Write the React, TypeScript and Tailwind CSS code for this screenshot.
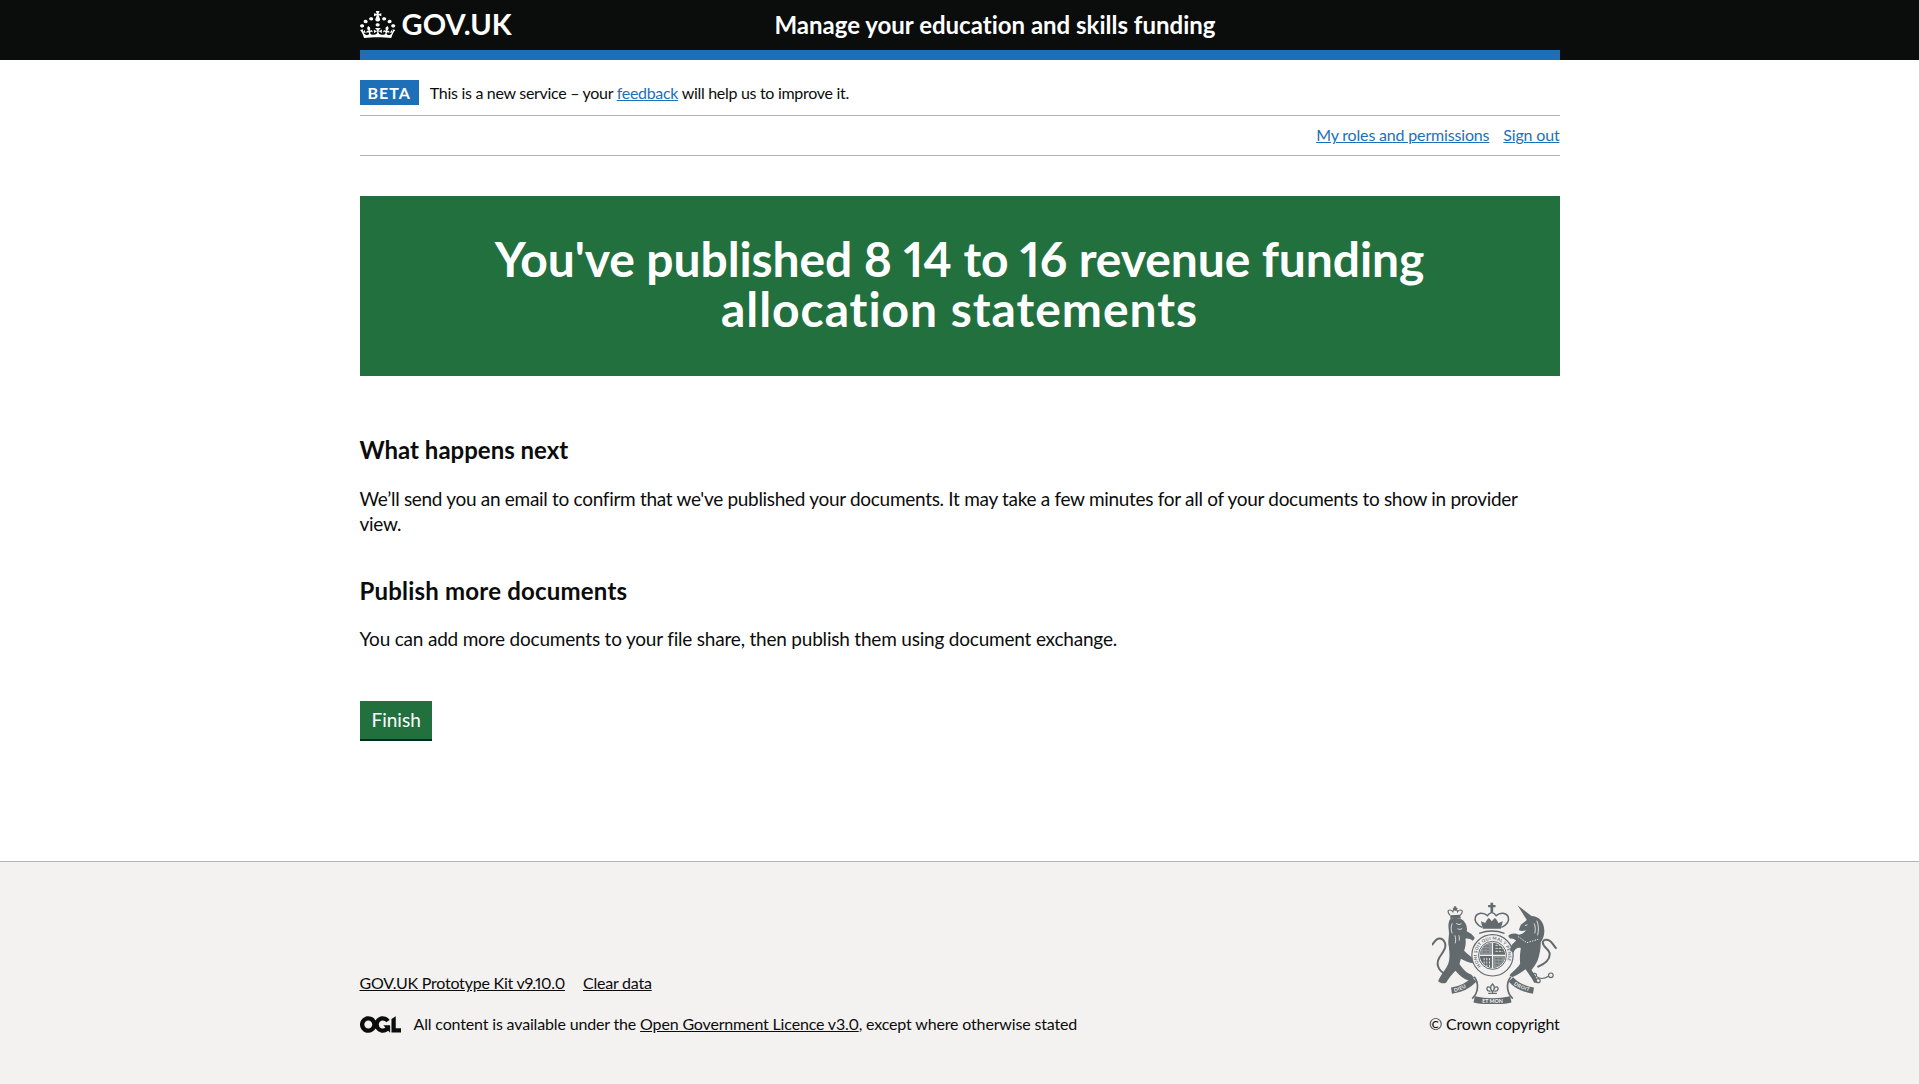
const font = "font-['Lato',sans-serif] [font-variant-ligatures:none] proportional-nums";

function Crown() {
  return (
    <svg viewBox="0 0 32.6 30" width="36" height="27" preserveAspectRatio="none" className="shrink-0 text-white" aria-hidden="true">
      <path fill="currentColor" fillRule="evenodd" d="M22.6 10.4c-1 .4-2-.1-2.4-1-.4-.9.1-2 1-2.4.9-.4 2 .1 2.4 1s-.1 2-1 2.4m-5.9 6.7c-.9.4-2-.1-2.4-1-.4-.9.1-2 1-2.4.9-.4 2 .1 2.4 1s-.1 2-1 2.4m10.8-3.7c-1 .4-2-.1-2.4-1-.4-.9.1-2 1-2.4.9-.4 2 .1 2.4 1s0 2-1 2.4m3.3 4.8c-1 .4-2-.1-2.4-1-.4-.9.1-2 1-2.4.9-.4 2 .1 2.4 1s-.1 2-1 2.4M17 4.7l2.3 1.2V2.5l-2.3.7-.2-.2.9-3h-3.4l.9 3-.2.2c-.1.1-2.3-.7-2.3-.7v3.4L15 4.7c.1.1.1.2.2.2l-1.3 4c-.1.2-.1.4-.1.6 0 1.1.8 2 1.9 2.2h.7c1-.2 1.9-1.1 1.9-2.2 0-.2 0-.4-.1-.6l-1.3-4c-.1-.1 0-.2.1-.2m-7.6 5.7c.9.4 2-.1 2.4-1 .4-.9-.1-2-1-2.4-.9-.4-2 .1-2.4 1s0 2 1 2.4m-5 3c.9.4 2-.1 2.4-1 .4-.9-.1-2-1-2.4-.9-.4-2 .1-2.4 1s.1 2 1 2.4m-3.2 4.8c.9.4 2-.1 2.4-1 .4-.9-.1-2-1-2.4-.9-.4-2 .1-2.4 1s0 2 1 2.4m14.8 11c4.4 0 8.6.3 12.3.8 1.1-4.5 2.4-7 3.7-8.8l-2.5-.9c.2 1.3.3 1.9 0 2.7-.4-.4-.8-1.1-1.1-2.3l-1.2 4c.7-.5 1.3-.8 2-.9-1.1 2.5-2.6 3.1-3.5 3-1.1-.2-1.7-1.2-1.5-2.1.3-1.2 1.5-1.5 2.1-.1 1.1-2.3-.8-3-2-2.3 1.9-1.9 2.1-3.5.6-5.6-2.1 1.6-2.1 3.2-1.2 5.5-1.2-1.4-3.2-.6-2.5 1.6.9-1.4 2.1-.5 1.9.8-.2 1.1-1.7 2.1-3.5 1.9-2.7-.2-2.9-2.1-2.9-3.6.7-.1 1.9.5 2.9 1.9l.4-4.3c-1.1 1.1-2.1 1.4-3.2 1.4.4-1.2 2.1-3 2.1-3h-5.4s1.7 1.9 2.1 3c-1.1 0-2.1-.2-3.2-1.4l.4 4.3c1-1.4 2.2-2 2.9-1.9-.1 1.5-.2 3.4-2.9 3.6-1.9.2-3.4-.8-3.5-1.9-.2-1.3 1-2.2 1.9-.8.7-2.3-1.2-3-2.5-1.6.9-2.2.9-3.9-1.2-5.5-1.5 2-1.3 3.7.6 5.6-1.2-.7-3.1 0-2 2.3.6-1.4 1.8-1.1 2.1.1.2.9-.3 1.9-1.5 2.1-.9.2-2.4-.5-3.5-3 .6 0 1.2.3 2 .9l-1.2-4c-.3 1.1-.7 1.9-1.1 2.3-.3-.8-.2-1.4 0-2.7l-2.9.9C1.3 23 2.6 25.5 3.7 30c3.7-.5 7.9-.8 12.3-.8" />
    </svg>
  );
}

function Ogl() {
  return (
    <svg viewBox="0 0 483.2 195.7" width="41" height="17" className="shrink-0 text-[#0b0c0c]" aria-hidden="true">
      <path fill="currentColor" d="M421.5 142.8V.1l-50.7 32.3v161.1h112.4v-50.7zm-122.3-9.6A47.12 47.12 0 0 1 221 97.8c0-26 21.1-47.1 47.1-47.1 16.7 0 31.4 8.7 39.7 21.8l42.7-27.2A97.63 97.63 0 0 0 268.1 0c-36.5 0-68.3 20.1-85.1 49.7A98 98 0 0 0 97.8 0C43.9 0 0 43.9 0 97.8s43.9 97.8 97.8 97.8c36.5 0 68.3-20.1 85.1-49.7a97.76 97.76 0 0 0 149.6 25.4l19.4 22.2h3v-87.8h-80l24.3 27.5zM97.8 145c-26 0-47.1-21.1-47.1-47.1s21.1-47.1 47.1-47.1 47.2 21 47.2 47S123.8 145 97.8 145" />
    </svg>
  );
}

function Crest() {
  const c = "#626a6e";
  const bg = "#f3f2f1";
  const face = "Lato, sans-serif";
  return (
    <svg viewBox="25 20 372 306" width="125" height="102" aria-hidden="true">
      <defs>
        <clipPath id="crest-shield">
          <circle cx="205" cy="180" r="38" />
        </clipPath>
      </defs>
      {/* lion's crown */}
      <path fill="none" stroke={c} strokeWidth="3.5" d="M78 60C70 52 70 44 77 44c4 0 7 2 9 5 1-5 4-8 7-9 3 1 6 4 7 9 2-3 5-5 9-5 7 0 7 8-1 16" />
      <path fill={c} d="M90 33h6v4h4v4h-4v5h-6v-5h-4v-4h4zM78 60l30-2 2 12c-10-3-22-3-31 2z" />
      {/* lion */}
      <path fill={c} d="M76 74C86 66 108 66 118 76c8 8 12 20 10 32 8 4 18 10 24 20l-6 8c-8-6-16-8-22-6 2 12 0 24-4 36 10 10 22 20 32 26l-6 12c-14-2-28-10-36-14l-4 16c8 12 18 26 36 32l8 10-14 8c-18-4-32-18-42-30-10 10-22 24-28 36-8 4-18 2-24-4 6-18 22-34 30-52 6-16 4-34 2-52-4-18 2-32 0-48-2-12-2-22 2-32z" />
      <path fill="none" stroke={bg} strokeWidth="2.5" d="M96 84l8 4 8-3M100 100c4 3 10 3 14-1M84 84c-4 10-4 20 0 30M92 120c3 8 3 16 1 24M104 120c2 6 2 10 1 16" />
      <path fill="none" stroke={c} strokeWidth="6" strokeLinecap="round" d="M66 238C42 226 34 206 46 186c10-16 22-28 16-44-4-12-16-16-24-10-6 4-8 10-14 16" />
      {/* royal crown */}
      <path fill="none" stroke={c} strokeWidth="4.5" d="M174 96c-16-8-24-20-20-32 5-12 24-14 36-3 3-5 8-8 13-10 5 2 10 5 13 10 12-11 31-9 36 3 4 12-4 24-20 32" />
      <path fill={c} d="M170 78c6 2 9 3 13 6 2-6 6-12 11-16 3 3 6 6 9 10 3-4 6-7 9-10 5 4 9 10 11 16 4-3 7-4 13-6l-6 22h-54z" />
      <path fill={c} d="M199 22h8v7h7v7h-7v14h-8V36h-7v-7h7z" />
      <path fill="none" stroke={c} strokeWidth="4.5" d="M165 114c24-9 52-9 76 0" />
      {/* garter and shield */}
      <circle cx="205" cy="180" r="62" fill={bg} stroke={c} strokeWidth="3.5" />
      <circle cx="205" cy="180" r="42" fill={bg} stroke={c} strokeWidth="3" />
      <path id="crest-garter" fill="none" d="M205 227A47 47 0 1 1 205.1 227" />
      <text fontFamily={face} fontSize="13" fontWeight="700" fill={c} letterSpacing="0.8">
        <textPath href="#crest-garter" startOffset="13%">HONI SOIT QUI MAL Y PENSE</textPath>
      </text>
      <g clipPath="url(#crest-shield)">
        <rect x="165" y="140" width="80" height="80" fill={c} />
        <rect x="167" y="142" width="36" height="36" fill="#8d9396" />
        <rect x="207" y="182" width="36" height="36" fill="#8d9396" />
        <path fill="none" stroke={bg} strokeWidth="3.5" d="M205 140v80M165 180h80" />
        <path fill="none" stroke={c} strokeWidth="3" strokeDasharray="8 3" d="M176 152h20M176 161h20M176 170h20M214 190h20M214 199h18M214 208h12" />
        <path fill="none" stroke={bg} strokeWidth="2.5" strokeDasharray="7 3" d="M214 150h20M214 159h22M214 168h22M180 188v26M188 188v30M196 188v30" />
      </g>
      {/* unicorn */}
      <path fill={c} d="M280 30L322 62c20 0 36 16 38 38 2 16-2 30-10 40 0 20-4 40-10 56-6 12-12 20-18 28 8 12 16 22 18 38h-10c-8-16-18-28-26-40-8 6-22 16-40 24l-8-6c12-14 28-24 32-36-2-16 0-32 2-46-10-2-18 2-22 14l-10-6c0-16 10-24 18-30-6-6-14-8-18-6l-6-8c10-10 22-8 32-4 8 0 16-6 22-14-8 4-16 4-22 0l6-16 18-14z" />
      <path fill="none" stroke={bg} strokeWidth="3" strokeDasharray="4 4" d="M282 124l26 18 14-4 20-6" />
      <path fill="none" stroke={bg} strokeWidth="2.5" d="M338 76c6 14 6 30 2 44M330 84c4 10 4 20 2 30M310 88l-8 3" />
      <path fill="none" stroke={c} strokeWidth="6" strokeLinecap="round" d="M342 214c18-8 38-22 34-42-3-12-22-18-20-32 2-8 12-8 20-4 8 4 12 14 19 22" />
      <g fill="none" stroke={c} strokeWidth="3.5">
        <circle cx="331" cy="240" r="6" />
        <circle cx="342" cy="256" r="6" />
        <circle cx="380" cy="240" r="7" />
        <path d="M338 244c10 8 24 6 36-2" />
      </g>
      {/* motto ribbons */}
      <g fill="none" stroke={c} strokeWidth="19">
        <path d="M82 286c26-4 50-14 68-34" />
        <path d="M328 286c-26-4-50-14-68-34" />
        <path d="M150 312c36 8 74 8 110 0" />
      </g>
      <g fill="none" stroke={c} strokeWidth="5">
        <path d="M150 244c16 20 12 50-6 66" />
        <path d="M260 244c-16 20-12 50 6 66" />
      </g>
      <path fill="none" stroke={c} strokeWidth="4" d="M205 266c-7 6-8 14 0 24 8-10 7-18 0-24zM197 276c-8-4-12 4-6 10l8 2M213 276c8-4 12 4 6 10l-8 2M192 294h26" />
      <path id="crest-dieu" fill="none" d="M86 291c20-4 40-13 56-27" />
      <path id="crest-droit" fill="none" d="M264 264c16 13 38 22 60 27" />
      <text fontFamily={face} fontSize="15" fontWeight="700" fill={bg} letterSpacing="1">
        <textPath href="#crest-dieu" startOffset="8%">DIEU</textPath>
      </text>
      <text fontFamily={face} fontSize="15" fontWeight="700" fill={bg} letterSpacing="1">
        <textPath href="#crest-droit" startOffset="8%">DROIT</textPath>
      </text>
      <text x="205" y="323" textAnchor="middle" fontFamily={face} fontSize="16" fontWeight="700" fill={bg}>ET MON</text>
    </svg>
  );
}

export default function App() {
  return (
    <div className={`min-h-[1084px] flex flex-col bg-white text-[#0b0c0c] ${font}`}>
      <header className="bg-[#0b0c0c] h-[60px]">
        <div className="mx-auto w-[1200px] h-full border-b-[10px] border-[#1d70b8] relative flex items-start">
          <a className="flex items-center gap-[6px] h-[48px] text-white no-underline">
            <Crown />
            <span className="font-bold text-[29px] leading-[30px] tracking-[0.1px]">GOV.UK</span>
          </a>
          <span className="absolute left-[415px] top-0 leading-[50px] text-white font-bold text-[24px]">Manage your education and skills funding</span>
        </div>
      </header>

      <div className="mx-auto w-[1200px] flex-1">
        <div className="flex items-start gap-[11px] h-[56px] border-b border-[#b1b4b6] pt-[20px]">
          <strong className="bg-[#1d70b8] text-white font-bold text-[16px] tracking-[1px] leading-[25px] px-[8px]">BETA</strong>
          <p className="text-[16px] leading-[25px] tracking-[-0.3px]">This is a new service – your <a className="text-[#1d70b8] underline">feedback</a> will help us to improve it.</p>
        </div>
        <nav className="flex justify-end gap-[14px] h-[40px] border-b border-[#b1b4b6] text-[16px] leading-[38px] tracking-[-0.17px] text-[#1d70b8]">
          <a className="underline">My roles and permissions</a>
          <a className="underline">Sign out</a>
        </nav>

        <main className="pt-[40px]">
          <div className="bg-[#23703f] h-[180px] flex flex-col justify-center pb-[4px] text-center text-white font-bold text-[48px] leading-[50px]">
            <h1>
              <span className="block tracking-[-0.1px]">You've published 8 14 to 16 revenue funding</span>
              <span className="block tracking-[0.95px]">allocation statements</span>
            </h1>
          </div>

          <h2 className="mt-[59px] font-bold text-[24px] leading-[30px]">What happens next</h2>
          <p className="mt-[21px] text-[19px] leading-[25px] tracking-[-0.3px]">We’ll send you an email to confirm that we've published your documents. It may take a few minutes for all of your documents to show in provider view.</p>

          <h2 className="mt-[40px] font-bold text-[24px] leading-[30px] tracking-[0.2px]">Publish more documents</h2>
          <p className="mt-[20px] text-[19px] leading-[25px] tracking-[-0.2px]">You can add more documents to your file share, then publish them using document exchange.</p>

          <button className="mt-[50px] block bg-[#23703f] text-white text-[19px] leading-[25px] pl-[12px] pr-[11px] pt-[6px] pb-[7px] border-b-2 border-[#002d18]">Finish</button>
        </main>
      </div>

      <footer className="h-[223px] bg-[#f3f2f1] border-t border-[#b1b4b6]">
        <div className="mx-auto w-[1200px] h-full flex justify-between items-end pb-[50px] text-[16px] leading-[20px] tracking-[-0.22px]">
          <div>
            <ul className="flex gap-[18px] mb-[21px]">
              <li><a className="underline">GOV.UK Prototype Kit v9.10.0</a></li>
              <li><a className="underline">Clear data</a></li>
            </ul>
            <div className="flex items-center gap-[13px] tracking-[-0.16px]">
              <Ogl />
              <span>All content is available under the <a className="underline">Open Government Licence v3.0</a>, except where otherwise stated</span>
            </div>
          </div>
          <div className="flex flex-col items-center">
            <Crest />
            <span className="mt-[10px]">© Crown copyright</span>
          </div>
        </div>
      </footer>
    </div>
  );
}
